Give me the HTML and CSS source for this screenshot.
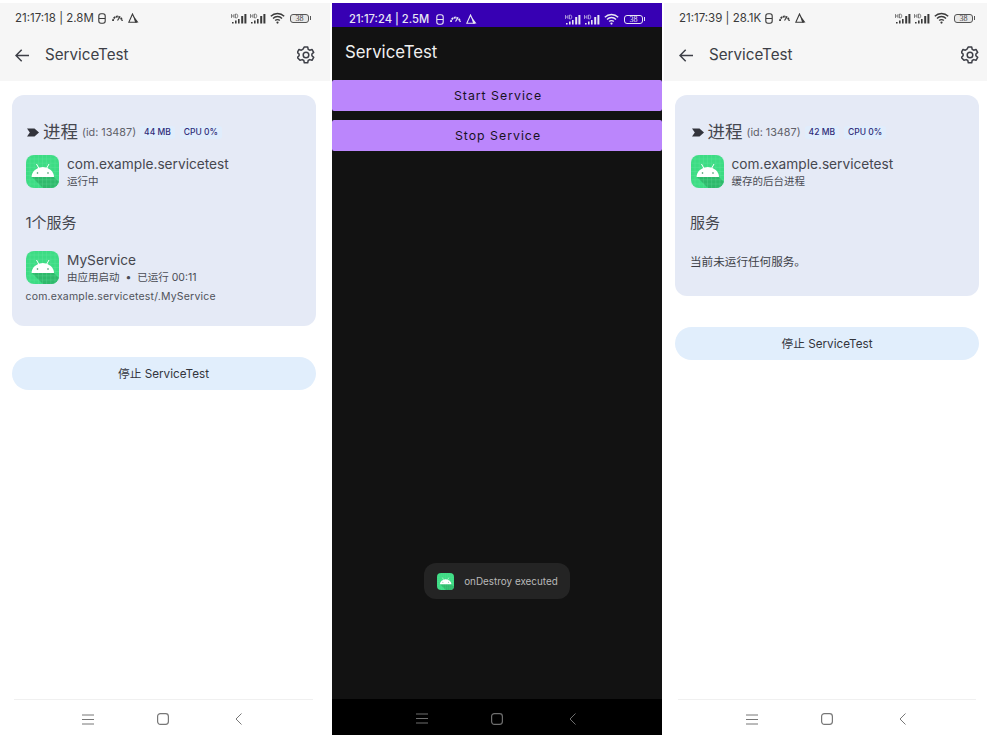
FILE: index.html
```html
<!DOCTYPE html>
<html lang="zh">
<head>
<meta charset="utf-8">
<title>ServiceTest</title>
<link rel="stylesheet" href="styles.css">
</head>
<body>
<svg class="defs" width="0" height="0" aria-hidden="true">
  <defs>
    <symbol id="android" viewBox="0 0 33 33">
      <rect width="33" height="33" rx="8" fill="#3ddc84"/>
      <path d="M6 22 H28 L33 27 V25 A8 8 0 0 1 25 33 H17 Z" fill="#2fb96b"/>
      <path d="M4 0V33M8.200 0V33M12.400 0V33M16.500 0V33M20.600 0V33M24.800 0V33M29 0V33M0 4H33M0 8.200H33M0 12.400H33M0 16.500H33M0 20.600H33M0 24.800H33M0 29H33" stroke="#7ceeb0" stroke-width=".4" opacity=".55"/>
      <path d="M5.600 22a11.200 10 0 0 1 22.400 0z" fill="#fff"/>
      <path d="M10.500 9l2.200 4M23 9l-2.200 4" stroke="#fff" stroke-width="1"/>
      <circle cx="11.500" cy="18" r=".8" fill="#2a8f58"/>
      <circle cx="22" cy="18" r=".8" fill="#2a8f58"/>
    </symbol>
    <symbol id="coil" viewBox="0 0 8 11">
      <rect x=".8" y=".8" width="6.400" height="9.400" rx="2.200" fill="none" stroke="currentColor" stroke-width="1.100"/>
      <path d="M1 5.500h6" stroke="currentColor" stroke-width="1"/>
    </symbol>
    <symbol id="gauge" viewBox="0 0 11 8">
      <path d="M1 7a4.500 4.500 0 1 1 9 0" fill="none" stroke="currentColor" stroke-width="1.800" stroke-dasharray="2 .6"/>
      <path d="M5.500 6.500L7.500 3.500" stroke="currentColor" stroke-width="1.200"/>
    </symbol>
    <symbol id="tri" viewBox="0 0 11 10">
      <path d="M4.500 1L.8 9.300h7.400z" fill="none" stroke="currentColor" stroke-width="1.100"/>
      <path d="M6 3.500L7 9.500h3.500z" fill="currentColor"/>
    </symbol>
    <symbol id="signal" viewBox="0 0 16 11">
      <path d="M1 10.500h1.600v-1.500H1zM4 10.500h1.600V7.500H4zM7 10.500h1.600V6H7zM10.200 10.500h2V3h-2zM13.400 10.500h2V1h-2z" fill="currentColor"/>
      <path d="M.5 1v4M3 1v4M.5 3H3M4.500 1v4h1.200l1-1V2l-1-1z" fill="none" stroke="currentColor" stroke-width=".6"/>
    </symbol>
    <symbol id="wifi" viewBox="0 0 15 12">
      <path d="M.8 4.200a9.500 9.500 0 0 1 13.400 0M3 6.400a6.400 6.400 0 0 1 9 0M5.200 8.600a3.200 3.200 0 0 1 4.600 0" fill="none" stroke="currentColor" stroke-width="1.400"/>
      <circle cx="7.500" cy="10.600" r="1.100" fill="currentColor"/>
    </symbol>
    <symbol id="arrow" viewBox="0 0 14 13">
      <path d="M14 6.500H1.200M6.700 .8L1 6.500l5.700 5.700" fill="none" stroke="currentColor" stroke-width="1.500"/>
    </symbol>
    <symbol id="gear" viewBox="0 0 18 18">
      <path d="M7.300 1h3.400l.5 2.300 1.500.9 2.300-.7 1.700 2.900-1.800 1.600v1.800l1.800 1.600-1.700 2.900-2.300-.7-1.500.9-.5 2.300H7.300l-.5-2.300-1.500-.9-2.300.7L.3 11.400l1.800-1.600V8L.3 6.400 2 3.500l2.300.7 1.500-.9z" fill="none" stroke="currentColor" stroke-width="1.500" stroke-linejoin="round"/>
      <circle cx="9" cy="9" r="2.800" fill="none" stroke="currentColor" stroke-width="1.500"/>
    </symbol>
    <symbol id="tag" viewBox="0 0 12 9">
      <path d="M0 .5h7.500L12 4.500 7.500 8.500H0L2.800 4.500z" fill="currentColor"/>
    </symbol>
    <symbol id="menu" viewBox="0 0 12 11">
      <path d="M0 1h12M0 5.500h12M0 10h12" stroke="currentColor" stroke-width="1"/>
    </symbol>
    <symbol id="home" viewBox="0 0 12 12">
      <rect x=".6" y=".6" width="10.800" height="10.800" rx="2.800" fill="none" stroke="currentColor" stroke-width="1.200"/>
    </symbol>
    <symbol id="back" viewBox="0 0 7 12">
      <path d="M6.500 .5L1 6l5.500 5.500" fill="none" stroke="currentColor" stroke-width="1"/>
    </symbol>
  </defs>
</svg>

<main class="screens">
  <section class="phone">
    <div class="status status-first">
      <span class="clock">21:17:18 | 2.8M</span>
      <svg class="ic-coil"><use href="#coil"/></svg>
      <svg class="ic-gauge"><use href="#gauge"/></svg>
      <svg class="ic-tri"><use href="#tri"/></svg>
      <span class="spacer"></span>
      <svg class="ic-signal"><use href="#signal"/></svg>
      <svg class="ic-signal"><use href="#signal"/></svg>
      <svg class="ic-wifi"><use href="#wifi"/></svg>
      <span class="battery">38</span>
    </div>
    <header class="appbar">
      <svg class="ic-arrow"><use href="#arrow"/></svg>
      <span class="appbar-title">ServiceTest</span>
      <svg class="ic-gear"><use href="#gear"/></svg>
    </header>
    <div class="content">
      <div class="card">
        <div class="proc-head">
          <svg class="ic-tag"><use href="#tag"/></svg>
          <span class="proc-title">进程</span>
          <span class="proc-id">(id: 13487)</span>
          <span class="chip">44 MB</span>
          <span class="chip">CPU 0%</span>
        </div>
        <div class="app-row">
          <svg class="app-icon"><use href="#android"/></svg>
          <div class="app-text">
            <div class="app-name">com.example.servicetest</div>
            <div class="app-sub">运行中</div>
          </div>
        </div>
        <h2 class="section-title">1个服务</h2>
        <div class="app-row app-row-service">
          <svg class="app-icon"><use href="#android"/></svg>
          <div class="app-text">
            <div class="app-name">MyService</div>
            <div class="app-sub">由应用启动 &nbsp;•&nbsp; 已运行 00:11</div>
          </div>
        </div>
        <div class="service-path">com.example.servicetest/.MyService</div>
      </div>
      <button class="stop-btn">停止 ServiceTest</button>
    </div>
    <nav class="navbar">
      <svg class="ic-menu"><use href="#menu"/></svg>
      <svg class="ic-home"><use href="#home"/></svg>
      <svg class="ic-back"><use href="#back"/></svg>
    </nav>
  </section>

  <section class="phone phone-dark">
    <div class="status status-dark">
      <span class="clock">21:17:24 | 2.5M</span>
      <svg class="ic-coil"><use href="#coil"/></svg>
      <svg class="ic-gauge"><use href="#gauge"/></svg>
      <svg class="ic-tri"><use href="#tri"/></svg>
      <span class="spacer"></span>
      <svg class="ic-signal"><use href="#signal"/></svg>
      <svg class="ic-signal"><use href="#signal"/></svg>
      <svg class="ic-wifi"><use href="#wifi"/></svg>
      <span class="battery">38</span>
    </div>
    <div class="dark-title">ServiceTest</div>
    <div class="dark-body">
      <button class="purple-btn">Start Service</button>
      <button class="purple-btn">Stop Service</button>
      <div class="toast">
        <svg class="toast-icon"><use href="#android"/></svg>
        <span>onDestroy executed</span>
      </div>
    </div>
    <nav class="navbar navbar-dark">
      <svg class="ic-menu"><use href="#menu"/></svg>
      <svg class="ic-home"><use href="#home"/></svg>
      <svg class="ic-back"><use href="#back"/></svg>
    </nav>
  </section>

  <section class="phone phone-last">
    <div class="status status-last">
      <span class="clock">21:17:39 | 28.1K</span>
      <svg class="ic-coil"><use href="#coil"/></svg>
      <svg class="ic-gauge"><use href="#gauge"/></svg>
      <svg class="ic-tri"><use href="#tri"/></svg>
      <span class="spacer"></span>
      <svg class="ic-signal"><use href="#signal"/></svg>
      <svg class="ic-signal"><use href="#signal"/></svg>
      <svg class="ic-wifi"><use href="#wifi"/></svg>
      <span class="battery">38</span>
    </div>
    <header class="appbar">
      <svg class="ic-arrow"><use href="#arrow"/></svg>
      <span class="appbar-title">ServiceTest</span>
      <svg class="ic-gear"><use href="#gear"/></svg>
    </header>
    <div class="content">
      <div class="card">
        <div class="proc-head">
          <svg class="ic-tag"><use href="#tag"/></svg>
          <span class="proc-title">进程</span>
          <span class="proc-id">(id: 13487)</span>
          <span class="chip">42 MB</span>
          <span class="chip">CPU 0%</span>
        </div>
        <div class="app-row">
          <svg class="app-icon"><use href="#android"/></svg>
          <div class="app-text">
            <div class="app-name">com.example.servicetest</div>
            <div class="app-sub">缓存的后台进程</div>
          </div>
        </div>
        <h2 class="section-title">服务</h2>
        <div class="empty-note">当前未运行任何服务。</div>
      </div>
      <button class="stop-btn">停止 ServiceTest</button>
    </div>
    <nav class="navbar">
      <svg class="ic-menu"><use href="#menu"/></svg>
      <svg class="ic-home"><use href="#home"/></svg>
      <svg class="ic-back"><use href="#back"/></svg>
    </nav>
  </section>
</main>
</body>
</html>
```

FILE: styles.css
```css
* { box-sizing: border-box; }
html, body { margin: 0; height: 100%; background: #fff; overflow: hidden; }
body { font-family: Inter, "Noto Sans", "Noto Sans CJK SC", sans-serif; color: #3d3f47; }
.defs { position: absolute; }
svg { display: block; flex: none; }

.screens {
  display: grid;
  grid-template-columns: 330px 330px 323px;
  column-gap: 2px;
  padding-top: 3px;
  height: 735px;
}
.phone { display: flex; flex-direction: column; height: 732px; background: #fff; }

/* status bar */
.status {
  display: flex;
  align-items: center;
  height: 32px;
  padding: 0 20px 2px 15px;
  background: #f6f6f6;
  color: #3a3a3a;
}
.clock { font-size: 11.500px; line-height: 14px; white-space: nowrap; }
.spacer { flex: 1; }
.ic-coil { width: 8px; height: 11px; margin-left: 4px; }
.ic-gauge { width: 11px; height: 8px; margin-left: 6px; }
.ic-tri { width: 11px; height: 10px; margin-left: 5px; }
.ic-signal { width: 16px; height: 11px; margin-right: 3px; }
.ic-wifi { width: 15px; height: 12px; margin-left: 1px; }
.battery {
  position: relative;
  width: 19px;
  height: 9px;
  margin-left: 5px;
  margin-right: 1px;
  border: 1px solid #555;
  border-radius: 3px;
  background: #e8e8e8;
  font: 8px/7px "Liberation Serif", serif;
  text-align: center;
  color: #444;
}
.battery::after {
  content: "";
  position: absolute;
  right: -3px;
  top: 1.500px;
  width: 1.500px;
  height: 4px;
  background: #555;
}

/* app bar */
.appbar {
  display: flex;
  align-items: center;
  height: 46px;
  padding: 0 15px 6px 15px;
  background: #f6f6f6;
  color: #3d3f47;
}
.ic-arrow { width: 14px; height: 13px; }
.ic-gear { width: 18px; height: 18px; margin-left: auto; }
.appbar-title { margin-left: 16px; font-size: 15.200px; line-height: 20px; }

/* card */
.content { flex: 1; padding: 14px 0 0 11.500px; }
.card {
  width: 304px;
  padding: 25px 14px 0 14px;
  border-radius: 12px;
  background: #e5eaf6;
}
.card + .stop-btn { margin-top: 31px; }
.proc-head { display: flex; align-items: center; height: 24px; padding-left: 1.500px; }
.ic-tag { width: 12px; height: 9px; margin-right: 4px; color: #33343c; }
.proc-title { font-size: 17.500px; line-height: 24px; color: #45474f; }
.proc-id { margin-left: 4px; font-size: 10.800px; color: #5f616a; }
.chip {
  margin-left: 4px;
  padding: 1px 4px;
  border-radius: 3px;
  background: #e0edfc;
  font-size: 8.500px;
  line-height: 11px;
  font-weight: 500;
  color: #2f2c78;
}
.chip + .chip { margin-left: 5px; }

.app-row { display: flex; align-items: center; gap: 8px; height: 33px; margin-top: 11px; padding-left: .5px; }
.app-icon { width: 33px; height: 33px; }
.app-text { padding-top: 1px; }
.app-name { font-size: 13.700px; line-height: 16px; color: #45474f; }
.app-sub { margin-top: 3px; font-size: 10.500px; line-height: 13px; color: #4b4d55; }
.section-title { margin: 24px 0 0; font-size: 15px; line-height: 22px; font-weight: 400; color: #45474f; }
.app-row-service { margin-top: 17px; }
.service-path { margin-top: 6px; padding-bottom: 22px; font-size: 10.500px; line-height: 14px; letter-spacing: .2px; color: #50525a; }
.empty-note { margin-top: 20px; padding-bottom: 26px; font-size: 11.600px; line-height: 16px; color: #3d3f47; }

.stop-btn {
  display: block;
  width: 304px;
  height: 33px;
  padding: 1px 0 0;
  border: 0;
  border-radius: 17px;
  background: #e1eefc;
  font: 11.700px/32px Inter, "Noto Sans CJK SC", sans-serif;
  color: #33353c;
}

/* nav */
.navbar {
  display: flex;
  align-items: center;
  justify-content: center;
  gap: 63px;
  height: 36px;
  margin: 0 17px 0 14px;
  padding-top: 3px;
  border-top: 1px solid #f0f0f0;
  color: #777;
}
.ic-menu { width: 12px; height: 11px; }
.ic-home { width: 12px; height: 12px; }
.ic-back { width: 7px; height: 12px; margin-left: 3px; margin-right: 3px; }

/* dark phone */
.phone-dark { background: #121212; }
.status-dark {
  height: 24px;
  padding: 8px 18px 0 17px;
  background: #3700b3;
  color: #e8e6f4;
}
.status-dark .clock { font-size: 11.200px; font-weight: 500; }
.status-dark .ic-coil { margin-left: 7px; }
.status-dark .battery { background: transparent; border-color: #e8e6f4; color: #e8e6f4; }
.status-dark .battery::after { background: #e8e6f4; }
.dark-title { height: 53px; padding: 14px 0 0 13px; font-size: 16.800px; line-height: 22px; color: #f0f0f0; }
.dark-body { flex: 1; display: flex; flex-direction: column; }
.purple-btn {
  display: block;
  width: 100%;
  height: 30.500px;
  padding: 1px 0 0 2px;
  border: 0;
  border-radius: 2px;
  background: #bb86fc;
  font: 400 12.300px/29px Inter, sans-serif;
  letter-spacing: 1px;
  color: #17121f;
}
.purple-btn + .purple-btn { margin-top: 9.500px; }
.toast {
  display: flex;
  align-items: center;
  gap: 10px;
  align-self: center;
  height: 36px;
  margin-top: auto;
  margin-bottom: 100px;
  padding: 0 12px 0 13px;
  border-radius: 12px;
  background: #242424;
  font-size: 9.900px;
  color: #b9b9b9;
}
.toast-icon { width: 17px; height: 17px; }
.navbar-dark { margin: 0; padding-left: 1px; border-top: 0; background: #000; color: #6e6e6e; }

/* third phone */
.status-last { padding-right: 13px; }
.phone-last .appbar { padding-right: 8px; }
.phone-last .content { padding-left: 11px; }
.phone-last .card { padding-left: 15px; }
.phone-last .navbar { margin: 0 11px 0 14px; }
```
